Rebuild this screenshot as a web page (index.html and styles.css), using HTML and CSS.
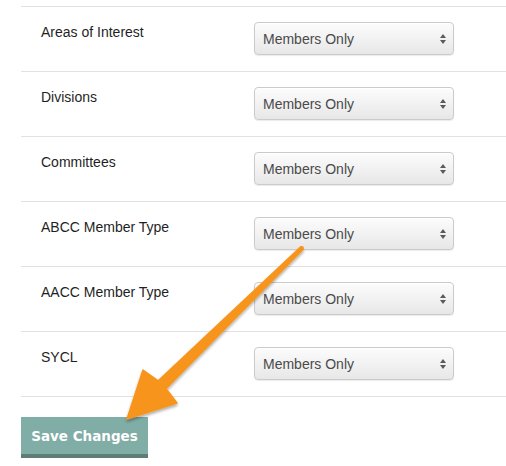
FILE: index.html
```html
<!DOCTYPE html>
<html>
<head>
<meta charset="utf-8">
<link rel="stylesheet" href="styles.css">
</head>
<body>
<div class="page">
  <div class="rows">
    <div class="row"><div class="label">Areas of Interest</div><div class="select"><span>Members Only</span><svg class="caret" width="8" height="12" viewBox="0 0 8 12"><path d="M4 1 L7 5 L1 5 Z M4 11 L7 7 L1 7 Z" fill="#5a5a5a"/></svg></div></div>
    <div class="row"><div class="label">Divisions</div><div class="select"><span>Members Only</span><svg class="caret" width="8" height="12" viewBox="0 0 8 12"><path d="M4 1 L7 5 L1 5 Z M4 11 L7 7 L1 7 Z" fill="#5a5a5a"/></svg></div></div>
    <div class="row"><div class="label">Committees</div><div class="select"><span>Members Only</span><svg class="caret" width="8" height="12" viewBox="0 0 8 12"><path d="M4 1 L7 5 L1 5 Z M4 11 L7 7 L1 7 Z" fill="#5a5a5a"/></svg></div></div>
    <div class="row"><div class="label">ABCC Member Type</div><div class="select"><span>Members Only</span><svg class="caret" width="8" height="12" viewBox="0 0 8 12"><path d="M4 1 L7 5 L1 5 Z M4 11 L7 7 L1 7 Z" fill="#5a5a5a"/></svg></div></div>
    <div class="row"><div class="label">AACC Member Type</div><div class="select"><span>Members Only</span><svg class="caret" width="8" height="12" viewBox="0 0 8 12"><path d="M4 1 L7 5 L1 5 Z M4 11 L7 7 L1 7 Z" fill="#5a5a5a"/></svg></div></div>
    <div class="row"><div class="label">SYCL</div><div class="select"><span>Members Only</span><svg class="caret" width="8" height="12" viewBox="0 0 8 12"><path d="M4 1 L7 5 L1 5 Z M4 11 L7 7 L1 7 Z" fill="#5a5a5a"/></svg></div></div>
  </div>
  <button class="save">Save Changes</button>
</div>
<svg class="arrow" width="506" height="466" viewBox="0 0 506 466">
  <defs>
    <filter id="sh" x="-20%" y="-20%" width="140%" height="140%">
      <feGaussianBlur in="SourceAlpha" stdDeviation="1.5"/>
      <feOffset dx="0" dy="1.5" result="b"/>
      <feComponentTransfer><feFuncA type="linear" slope="0.35"/></feComponentTransfer>
      <feMerge><feMergeNode/><feMergeNode in="SourceGraphic"/></feMerge>
    </filter>
  </defs>
  <polygon filter="url(#sh)" fill="#f7941d" stroke="#f7941d" stroke-width="1.5" stroke-linejoin="round"
    points="303.2,249.2 166,388.8 177,403 127,419 143,370 158.2,380.9 300.8,246.8"/>
  <circle cx="302" cy="248" r="1.9" fill="#f7941d"/>
</svg>
</body>
</html>
```

FILE: styles.css
```css
html, body {
  margin: 0;
  padding: 0;
  background: #ffffff;
}

body {
  font-family: "Liberation Sans", Arial, sans-serif;
  font-size: 14px;
  color: #222222;
}

.page {
  padding: 6px 0 0 21px;
}

.rows {
  border-bottom: 1px solid #e2e2e2;
}

.row {
  display: grid;
  grid-template-columns: 213px 200px;
  align-items: start;
  padding: 15px 0 16px 20px;
  border-top: 1px solid #e2e2e2;
}

.label {
  line-height: 20px;
  color: #1f1f1f;
}

.select {
  box-sizing: border-box;
  height: 33px;
  display: flex;
  align-items: center;
  justify-content: space-between;
  padding: 1px 6px 0 8px;
  border: 1px solid #cbcbcb;
  border-radius: 4px;
  background: linear-gradient(to bottom, #fcfcfc 0%, #f2f2f2 50%, #e7e7e7 100%);
  box-shadow: 0 1px 1px rgba(0, 0, 0, 0.08), inset 0 1px 0 #ffffff;
  color: #4a4a4a;
  font-size: 14px;
}

.caret {
  display: block;
}

.save {
  display: block;
  box-sizing: border-box;
  margin-top: 20px;
  width: 127px;
  height: 41px;
  padding: 0;
  border: none;
  border-bottom: 4px solid #5e7d76;
  background: #80ada5;
  color: #ffffff;
  font-family: "DejaVu Sans", "Open Sans", sans-serif;
  font-weight: 700;
  font-size: 13.5px;
  line-height: 20px;
  text-align: center;
}

.arrow {
  position: absolute;
  left: 0;
  top: 0;
  pointer-events: none;
}
```
